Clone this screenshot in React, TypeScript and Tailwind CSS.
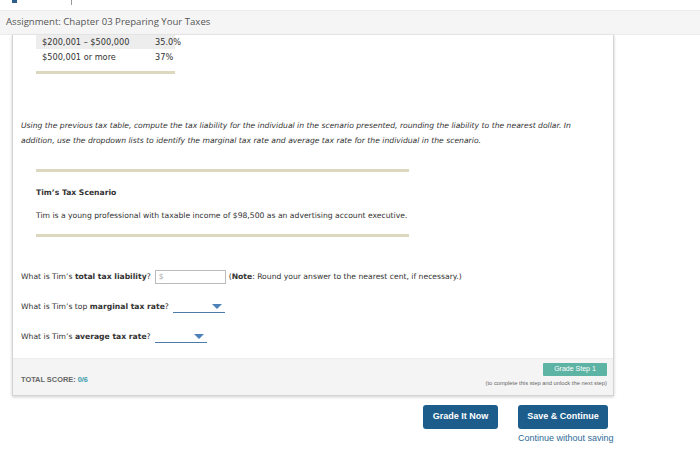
const verdana = "font-['DejaVu_Sans',Verdana,sans-serif]";

function TanRule({ w }: { w: string }) {
  return <div className={`h-[3px] ${w} bg-[#dcd8c0]`} />;
}

function Dropdown({ w }: { w: string }) {
  return (
    <span className={`inline-flex ${w} h-[12px] items-center justify-end border-b border-[#4b7ba6] pr-[3px] align-middle`}>
      <svg width="10" height="5" viewBox="0 0 10 5">
        <path d="M0 0 L10 0 L5 5 Z" fill="#4c82b8" />
      </svg>
    </span>
  );
}

export default function App() {
  return (
    <div className="relative h-[453px] w-[700px] overflow-hidden bg-white text-[#333]">
      {/* clipped top strip of the browser chrome */}
      <div className="flex h-[10px] items-start">
        <div className="ml-[12px] h-[3px] w-[5px] bg-[#2d5f8a]" />
        <div className="ml-[54px] h-[5px] w-px bg-[#999]" />
      </div>

      {/* header bar */}
      <div className="flex h-[25px] items-center border-y border-[#ececec] bg-[#f5f5f5] pl-[6px] font-['Open_Sans',sans-serif] text-[9.6px] text-[#555]">
        Assignment: Chapter 03 Preparing Your Taxes
      </div>

      {/* main panel */}
      <div className="ml-[12px] w-[602px] border-x border-b border-[#d4d4d4] bg-white shadow-[0_1px_3px_rgba(0,0,0,0.2)]">
        <div className={`${verdana} pl-[8px] text-[7.65px]`}>
          {/* tax table */}
          <div className="ml-[15px] w-[139px] text-[8.2px]">
            <div className="flex h-[14px] items-center bg-[#ededed] pl-[6px]">
              <span className="w-[113px] shrink-0">$200,001 – $500,000</span>
              <span className="shrink-0">35.0%</span>
            </div>
            <div className="flex h-[17px] items-center pl-[6px]">
              <span className="w-[113px] shrink-0">$500,001 or more</span>
              <span className="shrink-0">37%</span>
            </div>
            <div className="mt-[5px]">
              <TanRule w="w-[139px]" />
            </div>
          </div>

          {/* instructions */}
          <p className="mt-[44px] w-[580px] italic leading-[15px]">
            Using the previous tax table, compute the tax liability for the individual in the scenario presented, rounding the liability to the nearest dollar. In addition, use the dropdown lists to identify the marginal tax rate and average tax rate for the individual in the scenario.
          </p>

          {/* scenario */}
          <div className="ml-[15px] mt-[21px]">
            <TanRule w="w-[373px]" />
            <div className="mt-[16px] font-bold leading-[10px]">Tim’s Tax Scenario</div>
            <div className="mt-[13px] leading-[10px]">
              Tim is a young professional with taxable income of $98,500 as an advertising account executive.
            </div>
            <div className="mt-[13px]">
              <TanRule w="w-[373px]" />
            </div>
          </div>

          {/* questions */}
          <div className="mt-[32px] flex items-center leading-[15px]">
            <span>
              What is Tim’s <b>total tax liability</b>?
            </span>
            <span className="ml-[4px] flex h-[14px] w-[71px] items-center border border-[#bbb] pl-[3px] text-[#aaa]">$</span>
            <span className="ml-[3px]">
              (<b>Note</b>: Round your answer to the nearest cent, if necessary.)
            </span>
          </div>
          <div className="mt-[15px] flex items-center leading-[15px]">
            <span>
              What is Tim’s top <b>marginal tax rate</b>?
            </span>
            <span className="ml-[4px]">
              <Dropdown w="w-[52px]" />
            </span>
          </div>
          <div className="mt-[15px] flex items-center leading-[15px]">
            <span>
              What is Tim’s <b>average tax rate</b>?
            </span>
            <span className="ml-[4px]">
              <Dropdown w="w-[52px]" />
            </span>
          </div>
          <div className="h-[14px]" />
        </div>

        {/* footer */}
        <div className="flex h-[37px] items-start justify-between border-t border-[#ececec] bg-[#f4f4f4] pl-[8px] pr-[6px] font-['Liberation_Sans',Arial,sans-serif]">
          <div className="mt-[15px] text-[7.4px] font-bold text-[#666]">
            TOTAL SCORE: <span className="text-[#3a9bab]">0/6</span>
          </div>
          <div className="mt-[4px] flex flex-col items-end">
            <div className="flex h-[13px] w-[64px] items-center justify-center rounded-[1px] bg-[#5db3a4] text-[7px] text-white">
              Grade Step 1
            </div>
            <div className="mt-[3px] text-[5.8px] text-[#666]">(to complete this step and unlock the next step)</div>
          </div>
        </div>
      </div>

      {/* actions */}
      <div className="ml-[423px] mt-[9px] flex font-['Liberation_Sans',Arial,sans-serif]">
        <div className="flex h-[24px] w-[75px] items-center justify-center rounded-[3px] bg-[#1c5d8c] text-[9px] font-bold text-white">
          Grade It Now
        </div>
        <div className="ml-[20px] flex flex-col items-start">
          <div className="flex h-[24px] w-[90px] items-center justify-center rounded-[3px] bg-[#1c5d8c] text-[9px] font-bold text-white">
            Save &amp; Continue
          </div>
          <div className="mt-[3px] text-[9px] text-[#2f6b98]">Continue without saving</div>
        </div>
      </div>
    </div>
  );
}
